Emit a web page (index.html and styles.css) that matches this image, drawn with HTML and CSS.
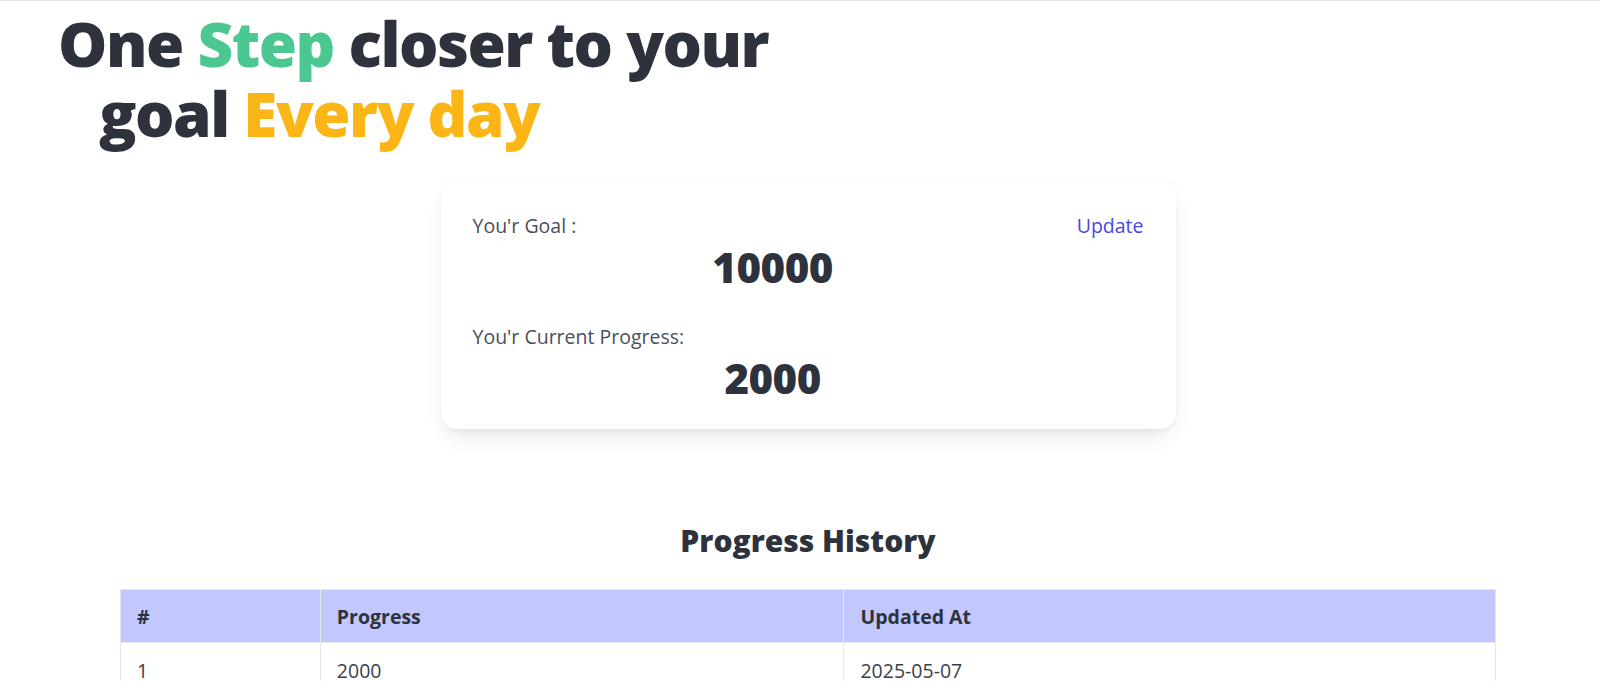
FILE: index.html
```html
<!DOCTYPE html>
<html lang="en">
<head>
<meta charset="utf-8">
<title>Goal Tracker</title>
<link rel="stylesheet" href="styles.css">
</head>
<body>
<div class="page">
  <h1 class="hero"><span class="line1">One <span class="green">Step</span> closer to your</span><span class="line2">goal <span class="yellow">Every day</span></span></h1>

  <div class="main">
    <section class="card">
      <div class="card-body">
        <div class="label">You'r Goal :</div>
        <div class="big">10000</div>
        <div class="label label2">You'r Current Progress:</div>
        <div class="big">2000</div>
      </div>
      <a class="update" href="#">Update</a>
    </section>

    <h2 class="history-title">Progress History</h2>

    <table class="history">
      <thead>
        <tr><th class="c1">#</th><th class="c2">Progress</th><th class="c3">Updated At</th></tr>
      </thead>
      <tbody>
        <tr><td>1</td><td>2000</td><td>2025-05-07</td></tr>
      </tbody>
    </table>
  </div>
</div>
</body>
</html>
```

FILE: styles.css
```css
* { box-sizing: border-box; }
html, body { margin: 0; padding: 0; background: #ffffff; }
body {
  font-family: "Open Sans", "Noto Sans", sans-serif;
  color: #2e323d;
  border-top: 1px solid #e3e4e6;
  overflow: hidden;
}
.page { padding-left: 16px; }

.hero {
  margin: 0;
  padding: 7px 0 0 42px;
  font-size: 62px;
  line-height: 70px;
  font-weight: 800;
  color: #2e323d;
  letter-spacing: -1.5px;
  display: flex;
  flex-direction: column;
  align-items: flex-start;
}
.line1, .line2 { display: block; height: 70px; }
.line2 { padding-left: 41px; }
.green { color: #4bc792; }
.yellow { color: #fbb516; }

.main { display: flex; flex-direction: column; align-items: center; }

.card {
  width: 735px;
  margin-top: 32px;
  background: #fff;
  border-radius: 16px;
  padding: 32px 32px 30px;
  display: flex;
  align-items: flex-start;
  gap: 4px;
  box-shadow: 0 12px 22px -6px rgba(0,0,0,0.10), 0 4px 8px -4px rgba(0,0,0,0.06), 0 0 6px rgba(0,0,0,0.03);
}
.card-body { flex: 1; }
.label { font-size: 19.5px; line-height: 28px; color: #4a4f5a; }
.update { font-size: 19.5px; line-height: 28px; color: #4448e6; text-decoration: none; }
.big {
  text-align: center;
  font-size: 42px;
  line-height: 42px;
  font-weight: 800;
  color: #2e323d;
  margin-top: 6px;
  letter-spacing: -0.5px;
}
.label2 { margin-top: 35px; }

.history-title {
  margin: 94px 0 0;
  font-size: 30px;
  line-height: 36px;
  font-weight: 800;
  color: #2e323d;
}

.history {
  width: 1376px;
  margin-top: 30px;
  border-collapse: collapse;
  font-size: 19.5px;
}
.history th, .history td {
  border: 1px solid #e5e7eb;
  text-align: left;
  padding: 0 16px;
}
.history thead tr { background: #c2c8fd; }
.history th { height: 53px; font-weight: 700; color: #2e323d; }
.history td { height: 56px; color: #3b3f49; }
.c1 { width: 200px; }
.c2 { width: 524px; }
.c3 { width: 652px; }
```
